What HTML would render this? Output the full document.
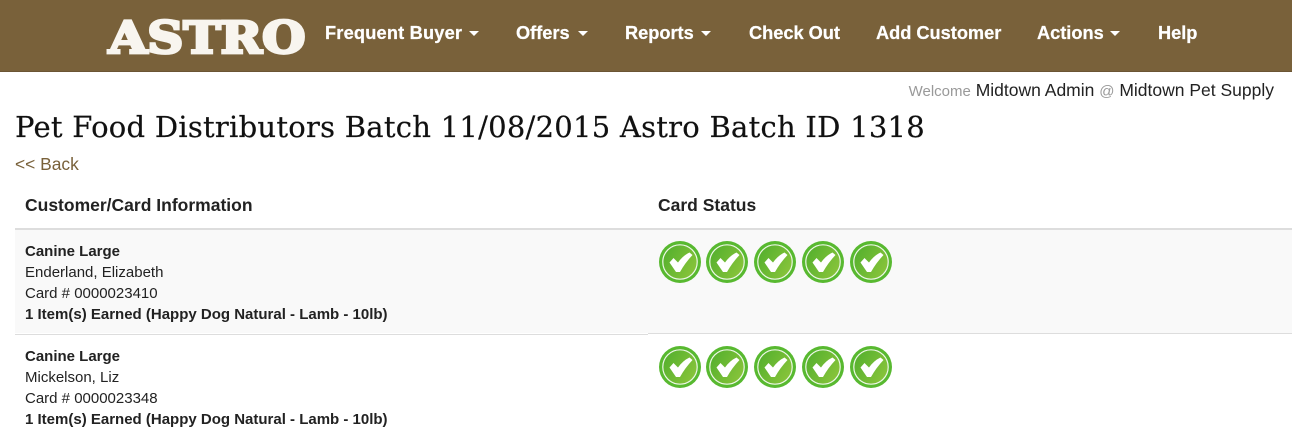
<!DOCTYPE html>
<html><head><meta charset="utf-8"><style>
html,body{margin:0;padding:0;background:#fff;width:1292px;height:437px;overflow:hidden;font-family:"Liberation Sans",sans-serif;color:#333}
.a{position:absolute;white-space:nowrap}
.nav{left:0;top:0;width:1292px;height:71px;background:#79613a;border-bottom:1px solid #6b5534}
.n{top:22px;font-size:18.2px;line-height:22px;font-weight:bold;color:#fff;-webkit-text-stroke:.25px #fff}
.c{position:absolute;top:31px;width:0;height:0;border-left:5px solid transparent;border-right:5px solid transparent;border-top:5px solid #fff}
.r{font-size:15px;line-height:21px;color:#222}
.ic{position:absolute;width:44px;height:44px}
</style></head><body>
<div class="a nav"></div>
<svg class="a" style="left:100px;top:10px" width="215" height="50"><text x="8.5" y="43" textLength="197" lengthAdjust="spacingAndGlyphs" font-family="'DejaVu Serif','Liberation Serif',serif" font-weight="bold" font-size="44" fill="#f8f5ef" stroke="#f8f5ef" stroke-width="2.8">ASTRO</text></svg>
<div class="a n" style="left:325px;letter-spacing:.2px">Frequent Buyer</div><i class="c" style="left:469px"></i>
<div class="a n" style="left:516px">Offers</div><i class="c" style="left:578px"></i>
<div class="a n" style="left:625px">Reports</div><i class="c" style="left:701px"></i>
<div class="a n" style="left:749px">Check Out</div>
<div class="a n" style="left:876px">Add Customer</div>
<div class="a n" style="left:1037px">Actions</div><i class="c" style="left:1110px"></i>
<div class="a n" style="left:1158px">Help</div>
<div class="a" style="right:18px;top:80px;font-size:17.5px;line-height:20px;color:#222"><span style="color:#999;font-size:15px">Welcome</span> Midtown Admin <span style="color:#999;font-size:15px">@</span> Midtown Pet Supply</div>
<div class="a" style="left:15px;top:108px;font-family:'DejaVu Serif',serif;font-size:29px;line-height:38px;letter-spacing:.26px;color:#111;-webkit-text-stroke:.2px #111">Pet Food Distributors Batch 11/08/2015 Astro Batch ID 1318</div>
<div class="a" style="left:15px;top:154px;font-size:17.4px;line-height:20px;color:#79613a">&lt;&lt; Back</div>
<div class="a" style="left:25px;top:195px;font-size:17.5px;line-height:20px;font-weight:bold;color:#222">Customer/Card Information</div>
<div class="a" style="left:658px;top:195px;font-size:17.5px;line-height:20px;font-weight:bold;color:#222">Card Status</div>
<div class="a" style="left:15px;top:228px;width:1277px;height:2px;background:#ddd"></div>
<div class="a" style="left:15px;top:230px;width:1277px;height:103px;background:#f9f9f9"></div>
<div class="a" style="left:15px;top:334px;width:633px;height:1px;background:#ddd"></div>
<div class="a" style="left:648px;top:333px;width:644px;height:1px;background:#ddd"></div>
<div class="a r" style="left:25px;top:241px"><b>Canine Large</b><br>Enderland, Elizabeth<br>Card # 0000023410<br><b>1 Item(s) Earned (Happy Dog Natural - Lamb - 10lb)</b></div>
<div class="a r" style="left:25px;top:346px"><b>Canine Large</b><br>Mickelson, Liz<br>Card # 0000023348<br><b>1 Item(s) Earned (Happy Dog Natural - Lamb - 10lb)</b></div>
<svg width="0" height="0" style="position:absolute"><defs>
<linearGradient id="g" x1="0" y1="0" x2="1" y2="0.6"><stop offset="0" stop-color="#4fae2c"/><stop offset="1" stop-color="#86c33a"/></linearGradient>
<g id="k"><circle cx="22" cy="22" r="21" fill="#58b930"/><circle cx="22" cy="22" r="17.2" fill="url(#g)" stroke="#eef7e8" stroke-width="1.2"/><path d="M11.5 22.5L15.5 18L20 22.5Q25 15.5 31.5 12.5L34.5 15Q27 23 22 32L18 32Z" fill="#fff"/></g>
</defs></svg>
<svg class="ic" style="left:658px;top:240px"><use href="#k"/></svg>
<svg class="ic" style="left:705px;top:240px"><use href="#k"/></svg>
<svg class="ic" style="left:753px;top:240px"><use href="#k"/></svg>
<svg class="ic" style="left:801px;top:240px"><use href="#k"/></svg>
<svg class="ic" style="left:849px;top:240px"><use href="#k"/></svg>
<svg class="ic" style="left:658px;top:345px"><use href="#k"/></svg>
<svg class="ic" style="left:705px;top:345px"><use href="#k"/></svg>
<svg class="ic" style="left:753px;top:345px"><use href="#k"/></svg>
<svg class="ic" style="left:801px;top:345px"><use href="#k"/></svg>
<svg class="ic" style="left:849px;top:345px"><use href="#k"/></svg>
</body></html>
